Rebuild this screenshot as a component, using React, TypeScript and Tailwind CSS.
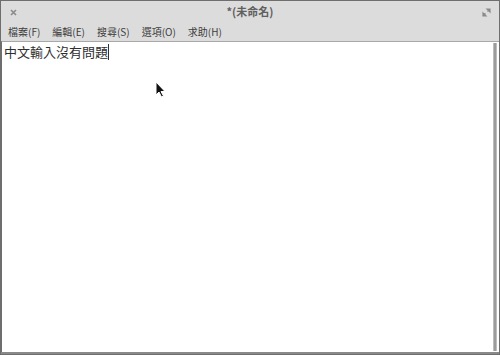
import React from 'react';

const menus = ['檔案(F)', '編輯(E)', '搜尋(S)', '選項(O)', '求助(H)'];

export default function App() {
  return (
    <div
      className="relative w-[500px] h-[355px] flex flex-col bg-[#dcdcdc] border border-[#6e6e6e] overflow-hidden"
      style={{ fontFamily: '"Noto Sans CJK TC", "Noto Sans", sans-serif' }}
    >
      {/* title bar */}
      <div className="relative h-[21px] flex items-center justify-center shrink-0">
        <svg className="absolute left-[9px] top-[8px]" width="7" height="7" viewBox="0 0 7 7">
          <path d="M1 1l5 5M6 1L1 6" stroke="#8a8a8a" strokeWidth="1.6" />
        </svg>
        <span className="text-[11px] font-bold text-[#606060] leading-none">*(未命名)</span>
        <svg className="absolute right-[8px] top-[7px]" width="9" height="9" viewBox="0 0 9 9">
          <path d="M5 1h3v3z M1 8V5l3 3z M7 2L5.5 3.5 M2 7l1.5-1.5" stroke="#8a8a8a" strokeWidth="1.2" fill="#8a8a8a" />
        </svg>
      </div>

      {/* menu bar */}
      <div className="h-[19px] flex items-center gap-[12px] pl-[7px] shrink-0 text-[10px] text-[#3c3c3c] leading-none">
        {menus.map((m) => (
          <span key={m}>{m}</span>
        ))}
      </div>

      {/* editor */}
      <div className="flex-1 flex border-t border-[#a8a8a8] border-l border-l-[#6e6e6e] bg-white">
        <div className="flex-1 pt-[1px] pl-[2px] text-[13px] text-[#2e2e2e] leading-[18px]">
          中文輸入沒有問題<span className="inline-block w-px h-[16px] bg-[#333] align-middle -mt-[2px]" />
        </div>
        <div className="w-[4px] mr-[2px] my-[1px] bg-[#9c9c9c] border-x border-[#bdbdbd]" />
      </div>
      <div className="h-[2px] bg-[#8a8a8a] shrink-0" />

      {/* mouse pointer */}
      <svg className="absolute left-[154px] top-[80px]" width="12" height="18" viewBox="0 0 12 18">
        <path d="M1 1v13l3-3 2.5 5 2-1-2.5-4.5H10z" fill="#111" stroke="#fff" strokeWidth="1" />
      </svg>
    </div>
  );
}
